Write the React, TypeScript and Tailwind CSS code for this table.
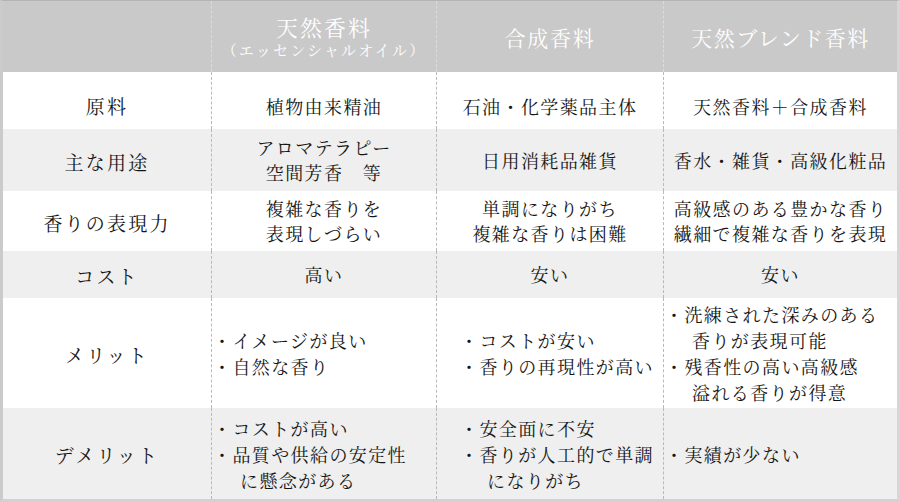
import React from "react";

type Cell = { lines: string[]; list?: boolean; pl?: string };

const font = { fontFamily: '"Noto Serif CJK JP", "Noto Sans CJK JP", serif' };

const rows: { label: string; h: string; bg: string; pt?: string; cells: Cell[] }[] = [
  {
    label: "原料",
    h: "h-[57px]",
    bg: "bg-white",
    pt: "pt-[11px]",
    cells: [
      { lines: ["植物由来精油"] },
      { lines: ["石油・化学薬品主体"] },
      { lines: ["天然香料＋合成香料"] },
    ],
  },
  {
    label: "主な用途",
    h: "h-[62px]",
    bg: "bg-[#eeefee]",
    cells: [
      { lines: ["アロマテラピー", "空間芳香　等"] },
      { lines: ["日用消耗品雑貨"] },
      { lines: ["香水・雑貨・高級化粧品"] },
    ],
  },
  {
    label: "香りの表現力",
    h: "h-[60px]",
    bg: "bg-white",
    cells: [
      { lines: ["複雑な香りを", "表現しづらい"] },
      { lines: ["単調になりがち", "複雑な香りは困難"] },
      { lines: ["高級感のある豊かな香り", "繊細で複雑な香りを表現"] },
    ],
  },
  {
    label: "コスト",
    h: "h-[47px]",
    bg: "bg-[#eeefee]",
    cells: [{ lines: ["高い"] }, { lines: ["安い"] }, { lines: ["安い"] }],
  },
  {
    label: "メリット",
    h: "h-[110px]",
    bg: "bg-white",
    cells: [
      { list: true, pl: "pl-[1px]", lines: ["・イメージが良い", "・自然な香り"] },
      { list: true, pl: "pl-[23px]", lines: ["・コストが安い", "・香りの再現性が高い"] },
      {
        list: true,
        pl: "pl-[1px]",
        lines: ["・洗練された深みのある", "+香りが表現可能", "・残香性の高い高級感", "+溢れる香りが得意"],
      },
    ],
  },
  {
    label: "デメリット",
    h: "h-[91px]",
    bg: "bg-[#eeefee]",
    cells: [
      { list: true, pl: "pl-[1px]", lines: ["・コストが高い", "・品質や供給の安定性", "+に懸念がある"] },
      { list: true, pl: "pl-[23px]", lines: ["・安全面に不安", "・香りが人工的で単調", "+になりがち"] },
      { list: true, pl: "pl-[1px]", lines: ["・実績が少ない"] },
    ],
  },
];

function Body({ cell }: { cell: Cell }) {
  if (cell.list) {
    return (
      <div className={`flex h-full w-full flex-col justify-center ${cell.pl}`}>
        {cell.lines.map((l, i) =>
          l.startsWith("+") ? (
            <div key={i} className="pl-[27px] leading-[26px]">
              {l.slice(1)}
            </div>
          ) : (
            <div key={i} className="leading-[26px]">
              {l}
            </div>
          )
        )}
      </div>
    );
  }
  return (
    <div className="flex h-full w-full flex-col items-center justify-center text-center">
      {cell.lines.map((l, i) => (
        <div key={i} className="leading-[25px]">
          {l}
        </div>
      ))}
    </div>
  );
}

export default function App() {
  return (
    <div
      className="h-[502px] w-[900px] overflow-hidden bg-white text-[#161616]"
      style={font}
    >
      <div className="flex h-full w-full flex-col border-t border-t-[#b4b4b4] border-l-[3px] border-l-[#cbcbcb] border-r-[3px] border-r-[#d6d6d6] border-b-[3px] border-b-[#d2d2d2]">
        <div className="grid h-[71px] grid-cols-[208px_225px_227px_1fr] bg-[#c9c9c9] text-white">
          <div />
          <div className="flex flex-col items-center justify-center border-l border-dashed border-l-[#dcdcdc]">
            <div className="text-[22px] leading-[26px] tracking-[2px]">天然香料</div>
            <div className="text-[15px] leading-[20px] tracking-[2.2px]">（エッセンシャルオイル）</div>
          </div>
          <div className="flex items-center justify-center border-l border-dashed border-l-[#dcdcdc] pt-[3px] text-[21px] tracking-[1.8px]">
            合成香料
          </div>
          <div className="flex items-center justify-center border-l border-dashed border-l-[#dcdcdc] pt-[3px] text-[21px] tracking-[1.5px]">
            天然ブレンド香料
          </div>
        </div>
        {rows.map((r, ri) => (
          <div
            key={ri}
            className={`grid grid-cols-[208px_225px_227px_1fr] ${r.h} ${r.bg} text-[18px] tracking-[1.4px]`}
          >
            <div className={`flex items-center justify-center ${r.pt ?? "pt-[4px]"} text-[19px] tracking-[2.2px]`}>
              {r.label}
            </div>
            {r.cells.map((c, ci) => (
              <div key={ci} className={`border-l border-dashed border-l-[#b9b9b9] ${r.pt ?? ""}`}>
                <Body cell={c} />
              </div>
            ))}
          </div>
        ))}
      </div>
    </div>
  );
}
